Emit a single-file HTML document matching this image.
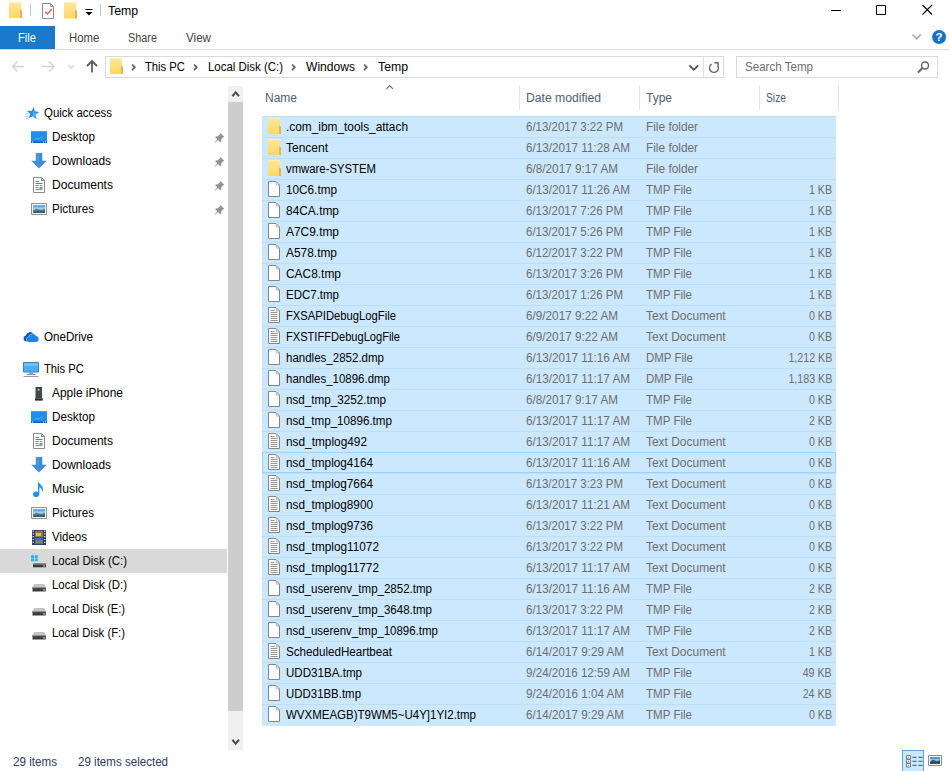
<!DOCTYPE html>
<html><head><meta charset="utf-8"><title>Temp</title>
<style>
*{box-sizing:border-box;margin:0;padding:0}
html,body{width:949px;height:771px;overflow:hidden;background:#fff}
body{position:relative;font-family:"Liberation Sans",sans-serif;font-size:12px;color:#000;line-height:16px}
.a{position:absolute;white-space:nowrap}
.t{position:absolute;white-space:nowrap;height:16px;line-height:16px}
.g{color:#6d6d6d}
.row{position:absolute;left:262px;width:574px;height:21px;background:#cce8ff;border-top:1px solid #bcdef9}
.row .ic{position:absolute;left:5px;top:1px}
.row span{position:absolute;top:2px;white-space:nowrap;line-height:16px;transform-origin:0 0}
.x{display:inline-block;transform-origin:0 0}
.row .n{left:24px}
.row .d{left:264px;color:#6d6d6d}
.row .ty{left:384px;color:#6d6d6d}
.row .s{right:4px;color:#6d6d6d;transform-origin:100% 0}
.nav{position:absolute;left:0;width:227px;height:24px}
</style></head><body>

<svg width="0" height="0" style="position:absolute"><defs><linearGradient id="fg" x1="0" y1="0" x2="0" y2="1"><stop offset="0" stop-color="#ffe89a"/><stop offset="1" stop-color="#ffd765"/></linearGradient></defs></svg>
<div class="a" style="left:108px;top:3px;font-size:12px;line-height:16px"><span class="x" style="transform:scaleX(1.0224)">Temp</span></div>
<div class="a" style="left:30px;top:4px;width:1px;height:12px;background:#c4c4c4"></div>
<div class="a" style="left:100px;top:4px;width:1px;height:12px;background:#c4c4c4"></div>
<svg class="a" style="left:9px;top:2px" width="14" height="16" viewBox="0 0 14 16"><path d="M0 0h12v16H0z" fill="url(#fg)"/><path d="M11 7.2l2 1.500V16h-2z" fill="#e2b64c"/><path d="M0 0h12v1H0z" fill="#ffefb5"/></svg>
<svg class="a" style="left:42px;top:3px" width="13" height="16" viewBox="0 0 13 16"><path d="M0.500 0.500h8l3 3v12h-11z" fill="#fff" stroke="#8a8a8a"/><path d="M8.500 0.500v3h3" fill="none" stroke="#a0a0a0"/><path d="M3 8.500l2.500 2.500 4.500-5" fill="none" stroke="#dc6a55" stroke-width="1.500"/></svg>
<svg class="a" style="left:64px;top:2px" width="14" height="17" viewBox="0 0 14 17"><path d="M0 0h12v16.5H0z" fill="url(#fg)"/><path d="M11 7.425l2 1.500V16.5h-2z" fill="#e2b64c"/><path d="M0 0h12v1H0z" fill="#ffefb5"/></svg>
<svg class="a" style="left:85px;top:9px" width="8" height="7" viewBox="0 0 8 7"><path d="M0.500 0.500h7" stroke="#000"/><path d="M0.500 3h7L4 6.500z" fill="#000"/></svg>
<svg class="a" style="left:829px;top:0" width="120" height="24" viewBox="0 0 120 24"><path d="M2 10.500h10" stroke="#000"/><path d="M47.500 5.500h9v9h-9z" fill="none" stroke="#000"/><path d="M93.500 5l9.500 9.500M103 5l-9.500 9.500" stroke="#000" stroke-width="1.1"/></svg>
<div class="a" style="left:0;top:26px;width:55px;height:23px;background:#1979ca"></div>
<div class="a" style="left:0;top:49px;width:949px;height:1px;background:#dadbdc"></div>
<div class="t" style="left:18px;top:30px;color:#fff"><span class="x" style="transform:scaleX(0.9305)">File</span></div>
<div class="t" style="left:69px;top:30px;color:#444"><span class="x" style="transform:scaleX(0.9464)">Home</span></div>
<div class="t" style="left:128px;top:30px;color:#444"><span class="x" style="transform:scaleX(0.9054)">Share</span></div>
<div class="t" style="left:186px;top:30px;color:#444"><span class="x" style="transform:scaleX(0.9691)">View</span></div>
<svg class="a" style="left:911px;top:33px" width="12" height="8" viewBox="0 0 12 8"><path d="M1.500 1.500l4.200 4.200 4.200-4.200" fill="none" stroke="#adadad" stroke-width="1.700"/></svg>
<svg class="a" style="left:931px;top:29px" width="16" height="16" viewBox="0 0 16 16"><circle cx="8.100" cy="8" r="7" fill="#1570c6"/><text x="8.100" y="12.200" text-anchor="middle" font-family="Liberation Sans, sans-serif" font-weight="bold" font-size="11.500" fill="#fff">?</text></svg>
<svg class="a" style="left:10px;top:58px" width="90" height="18" viewBox="0 0 90 18"><path d="M2.500 8.500h11.500M7.500 3.500l-5 5 5 5" fill="none" stroke="#d4d4d4" stroke-width="1.500"/><path d="M31.500 8.500h12.500M39 3.500l5 5-5 5" fill="none" stroke="#d4d4d4" stroke-width="1.500"/><path d="M58 7l3.200 3 3.200-3" fill="none" stroke="#d4d4d4" stroke-width="1.300"/><path d="M82 14.500v-11M77 8l5-5 5 5" fill="none" stroke="#5e5e5e" stroke-width="1.800"/></svg>
<div class="a" style="left:105px;top:56px;width:619px;height:22px;border:1px solid #d9d9d9;background:#fff"></div>
<div class="a" style="left:703px;top:57px;width:1px;height:20px;background:#e0e0e0"></div>
<svg class="a" style="left:110px;top:58px" width="14" height="16" viewBox="0 0 14 16"><path d="M0 0h12v16H0z" fill="url(#fg)"/><path d="M11 7.2l2 1.500V16h-2z" fill="#e2b64c"/><path d="M0 0h12v1H0z" fill="#ffefb5"/></svg>
<svg class="a" style="left:131px;top:63px" width="6" height="9" viewBox="0 0 6 9"><path d="M1 1.500l2.800 2.800-2.800 2.800" fill="none" stroke="#5e5e5e" stroke-width="1.700"/></svg>
<svg class="a" style="left:193px;top:63px" width="6" height="9" viewBox="0 0 6 9"><path d="M1 1.500l2.800 2.800-2.800 2.800" fill="none" stroke="#5e5e5e" stroke-width="1.700"/></svg>
<svg class="a" style="left:291px;top:63px" width="6" height="9" viewBox="0 0 6 9"><path d="M1 1.500l2.800 2.800-2.800 2.800" fill="none" stroke="#5e5e5e" stroke-width="1.700"/></svg>
<svg class="a" style="left:363px;top:63px" width="6" height="9" viewBox="0 0 6 9"><path d="M1 1.500l2.800 2.800-2.800 2.800" fill="none" stroke="#5e5e5e" stroke-width="1.700"/></svg>
<div class="t" style="left:145px;top:59px"><span class="x" style="transform:scaleX(0.937)">This PC</span></div>
<div class="t" style="left:208px;top:59px"><span class="x" style="transform:scaleX(0.9531)">Local Disk (C:)</span></div>
<div class="t" style="left:306px;top:59px"><span class="x" style="transform:scaleX(1.0064)">Windows</span></div>
<div class="t" style="left:378px;top:59px"><span class="x" style="transform:scaleX(1.0224)">Temp</span></div>
<svg class="a" style="left:688px;top:64px" width="12" height="8" viewBox="0 0 12 8"><path d="M1.500 1.500l4.300 4.300 4.300-4.300" fill="none" stroke="#505050" stroke-width="1.800"/></svg>
<svg class="a" style="left:707px;top:60px" width="14" height="15" viewBox="0 0 14 15"><path d="M4.600 4.200A4.400 4.400 0 1 0 11 6.200" fill="none" stroke="#666" stroke-width="1.500"/><path d="M7.300 2.700h3.700v3.700" fill="none" stroke="#666" stroke-width="1.500"/></svg>
<div class="a" style="left:736px;top:56px;width:202px;height:22px;border:1px solid #d9d9d9;background:#fff"></div>
<div class="t" style="left:745px;top:59px;color:#6d6d6d"><span class="x" style="transform:scaleX(0.9648)">Search Temp</span></div>
<svg class="a" style="left:916px;top:60px" width="14" height="14" viewBox="0 0 14 14"><circle cx="9" cy="5.500" r="3.500" fill="none" stroke="#666" stroke-width="1.500"/><path d="M6.500 8l-4.500 4.500" stroke="#666" stroke-width="2"/></svg>
<div class="nav" style="top:101px"><svg class="a" style="left:23px;top:4px" width="16" height="16" viewBox="0 0 16 16"><path d="M10.69 1.84 L11.84 6.36 L16.46 7.03 L12.51 9.52 L13.30 14.12 L9.71 11.13 L5.58 13.30 L7.31 8.97 L3.97 5.72 L8.62 6.02z" fill="#2a8fe8"/><path d="M10 5.500l1 2.300 2.300 0.300-1.700 1.600 0.400 2.300-2-1.100z" fill="#4fb6f7"/><path d="M4.300 8.500l-2.300 0.900M5 10.500l-3.300 1.600M5.500 12.700l-2.500 1.300" stroke="#7cc0f5" stroke-width="0.900"/></svg><div class="t" style="left:44px;top:4px"><span class="x" style="transform:scaleX(0.9529)">Quick access</span></div></div>
<div class="nav" style="top:125px"><svg class="a" style="left:31px;top:4px" width="16" height="16" viewBox="0 0 16 16"><path d="M0 2h16v12H0z" fill="#1f8fef"/><path d="M0 2h16v1H0z" fill="#3ba3f7"/><path d="M0 12.500h16v1.500H0z" fill="#0d62b8"/><path d="M1 13h1.200M12 13h1M14 13h1" stroke="#d8ecff" stroke-width="1"/><path d="M4 9.500q3 1.500 7-1.500" fill="none" stroke="#55b4fa" stroke-width="1"/></svg><div class="t" style="left:52px;top:4px"><span class="x" style="transform:scaleX(0.9766)">Desktop</span></div><svg class="a" style="left:213.500px;top:6.500px" width="11" height="11" viewBox="0 0 13 13"><path d="M7.2 0.800l5 5-1.300 0.500-2.600 2.600 0.300 2.200-1.300 1-2.500-2.500-3.600 3.200-0.500-0.500 3.200-3.600-2.500-2.500 1-1.300 2.200 0.300 2.600-2.600z" fill="#929292"/></svg></div>
<div class="nav" style="top:149px"><svg class="a" style="left:31px;top:4px" width="16" height="16" viewBox="0 0 16 16"><path d="M4.800 0h6.500v7.800h4.300l-7.600 7.700-7.600-7.700h4.400z" fill="#3c8ddb"/><path d="M5.800 0h2v8H5.800z" fill="#5aa5e8" opacity=".6"/></svg><div class="t" style="left:52px;top:4px"><span class="x" style="transform:scaleX(0.9937)">Downloads</span></div><svg class="a" style="left:213.500px;top:6.500px" width="11" height="11" viewBox="0 0 13 13"><path d="M7.2 0.800l5 5-1.300 0.500-2.600 2.600 0.300 2.200-1.300 1-2.500-2.500-3.600 3.200-0.500-0.500 3.200-3.600-2.500-2.500 1-1.300 2.200 0.300 2.600-2.600z" fill="#929292"/></svg></div>
<div class="nav" style="top:173px"><svg class="a" style="left:31px;top:4px" width="16" height="16" viewBox="0 0 16 16"><path d="M2.500 0.500h8l3 3v12h-11z" fill="#fff" stroke="#8a8a8a"/><path d="M10.500 0.500v3h3" fill="none" stroke="#8a8a8a"/><path d="M4.500 4.500h3.500M4.500 6.500h7" stroke="#3f85d0"/><path d="M4.500 8.500h3M8.500 8.500h3M4.500 10.500h3M4.500 12.500h7" stroke="#7d8a99"/><path d="M8.500 10h3v1.500h-3z" fill="#5b6f88"/></svg><div class="t" style="left:52px;top:4px"><span class="x" style="transform:scaleX(1.0049)">Documents</span></div><svg class="a" style="left:213.500px;top:6.500px" width="11" height="11" viewBox="0 0 13 13"><path d="M7.2 0.800l5 5-1.300 0.500-2.600 2.600 0.300 2.200-1.300 1-2.500-2.500-3.600 3.200-0.500-0.500 3.200-3.600-2.500-2.500 1-1.300 2.200 0.300 2.600-2.600z" fill="#929292"/></svg></div>
<div class="nav" style="top:197px"><svg class="a" style="left:31px;top:4px" width="16" height="16" viewBox="0 0 16 16"><path d="M0.500 2.500h15v11h-15z" fill="#fff" stroke="#8e8e8e"/><path d="M2 4h12v8H2z" fill="#9ccdf4"/><path d="M2 4h12v2.500H2z" fill="#6fa9e4"/><path d="M2 9.500q3-2.500 6-1 3 1 6-1V12H2z" fill="#4f7c80"/><path d="M2 11q4-1 12-0.500V12H2z" fill="#35585a"/></svg><div class="t" style="left:52px;top:4px"><span class="x" style="transform:scaleX(0.9686)">Pictures</span></div><svg class="a" style="left:213.500px;top:6.500px" width="11" height="11" viewBox="0 0 13 13"><path d="M7.2 0.800l5 5-1.300 0.500-2.600 2.600 0.300 2.200-1.300 1-2.500-2.500-3.600 3.200-0.500-0.500 3.200-3.600-2.500-2.500 1-1.300 2.200 0.300 2.600-2.600z" fill="#929292"/></svg></div>
<div class="nav" style="top:325px"><svg class="a" style="left:23px;top:4px" width="16" height="16" viewBox="0 0 16 16"><path d="M3.200 12.500a3 3 0 0 1-0.400-5.900 4.200 4.200 0 0 1 7.800-1.400 3.300 3.300 0 0 1 1.900 0.900l-4 6.400z" fill="#0f5eb8"/><path d="M6.500 13a2.600 2.600 0 0 1-0.300-5.200 3.600 3.600 0 0 1 6.700-0.700 3 3 0 0 1 0.600 5.900z" fill="#1c84e8" stroke="#fff" stroke-width="0.800" paint-order="stroke"/></svg><div class="t" style="left:44px;top:4px"><span class="x" style="transform:scaleX(0.9667)">OneDrive</span></div></div>
<div class="nav" style="top:357px"><svg class="a" style="left:23px;top:4px" width="16" height="16" viewBox="0 0 16 16"><path d="M0.500 1.500h15v9.500h-15z" fill="#4aaef8" stroke="#3f7fb8"/><path d="M1 2h14v3H1z" fill="#7cc6fb" opacity=".7"/><path d="M6 11.500h4v1.500H6z" fill="#8aa0b4"/><path d="M3.500 13h9v1h-9z" fill="#5aa0dc"/><path d="M0.500 15h15v1h-15z" fill="#9a9a9a"/></svg><div class="t" style="left:44px;top:4px"><span class="x" style="transform:scaleX(0.937)">This PC</span></div></div>
<div class="nav" style="top:381px"><svg class="a" style="left:31px;top:4px" width="16" height="16" viewBox="0 0 16 16"><path d="M4.500 2h6.500v11H4.500z" fill="#3f4a46"/><path d="M6.700 4h1.800v1.500H6.700z" fill="#c9d2cf"/><path d="M4 13.200h7.800v2.400H4z" fill="#2a2f2d"/></svg><div class="t" style="left:52px;top:4px"><span class="x" style="transform:scaleX(0.9945)">Apple iPhone</span></div></div>
<div class="nav" style="top:405px"><svg class="a" style="left:31px;top:4px" width="16" height="16" viewBox="0 0 16 16"><path d="M0 2h16v12H0z" fill="#1f8fef"/><path d="M0 2h16v1H0z" fill="#3ba3f7"/><path d="M0 12.500h16v1.500H0z" fill="#0d62b8"/><path d="M1 13h1.200M12 13h1M14 13h1" stroke="#d8ecff" stroke-width="1"/><path d="M4 9.500q3 1.500 7-1.500" fill="none" stroke="#55b4fa" stroke-width="1"/></svg><div class="t" style="left:52px;top:4px"><span class="x" style="transform:scaleX(0.9766)">Desktop</span></div></div>
<div class="nav" style="top:429px"><svg class="a" style="left:31px;top:4px" width="16" height="16" viewBox="0 0 16 16"><path d="M2.500 0.500h8l3 3v12h-11z" fill="#fff" stroke="#8a8a8a"/><path d="M10.500 0.500v3h3" fill="none" stroke="#8a8a8a"/><path d="M4.500 4.500h3.500M4.500 6.500h7" stroke="#3f85d0"/><path d="M4.500 8.500h3M8.500 8.500h3M4.500 10.500h3M4.500 12.500h7" stroke="#7d8a99"/><path d="M8.500 10h3v1.500h-3z" fill="#5b6f88"/></svg><div class="t" style="left:52px;top:4px"><span class="x" style="transform:scaleX(1.0049)">Documents</span></div></div>
<div class="nav" style="top:453px"><svg class="a" style="left:31px;top:4px" width="16" height="16" viewBox="0 0 16 16"><path d="M4.800 0h6.500v7.800h4.300l-7.600 7.700-7.600-7.700h4.400z" fill="#3c8ddb"/><path d="M5.800 0h2v8H5.800z" fill="#5aa5e8" opacity=".6"/></svg><div class="t" style="left:52px;top:4px"><span class="x" style="transform:scaleX(0.9937)">Downloads</span></div></div>
<div class="nav" style="top:477px"><svg class="a" style="left:31px;top:4px" width="16" height="16" viewBox="0 0 16 16"><path d="M7 0c0.500 3.200 5 3.800 5 8.300 0 1.200-0.500 2-1 2.500 0.400-2.300-1.200-4-2.700-4.500v7a3.200 2.700 0 1 1-1.300-2.200z" fill="#1e92f4"/></svg><div class="t" style="left:52px;top:4px"><span class="x" style="transform:scaleX(1.0209)">Music</span></div></div>
<div class="nav" style="top:501px"><svg class="a" style="left:31px;top:4px" width="16" height="16" viewBox="0 0 16 16"><path d="M0.500 2.500h15v11h-15z" fill="#fff" stroke="#8e8e8e"/><path d="M2 4h12v8H2z" fill="#9ccdf4"/><path d="M2 4h12v2.500H2z" fill="#6fa9e4"/><path d="M2 9.500q3-2.500 6-1 3 1 6-1V12H2z" fill="#4f7c80"/><path d="M2 11q4-1 12-0.500V12H2z" fill="#35585a"/></svg><div class="t" style="left:52px;top:4px"><span class="x" style="transform:scaleX(0.9686)">Pictures</span></div></div>
<div class="nav" style="top:525px"><svg class="a" style="left:31px;top:4px" width="16" height="16" viewBox="0 0 16 16"><path d="M1 1h14v15H1z" fill="#2b3766"/><path d="M3.800 1.800h8.400v6.400H3.800z" fill="#8f7b3a"/><path d="M3.800 8.800h8.400v6.400H3.800z" fill="#3f6fc0"/><path d="M5 4h5v3H5z" fill="#d8c24a"/><path d="M5 11.500h6v2.500H5z" fill="#8a8a3a"/><path d="M2.200 1.500v14M13.800 1.500v14" stroke="#f4f4ff" stroke-width="1.200" stroke-dasharray="1.200 1.600"/></svg><div class="t" style="left:52px;top:4px"><span class="x" style="transform:scaleX(0.9593)">Videos</span></div></div>
<div class="nav" style="top:549px;background:#d9d9d9"><svg class="a" style="left:31px;top:4px" width="16" height="16" viewBox="0 0 16 16"><path d="M0 2.300h3v2.600H0zM3.800 2.300h3v2.600h-3zM0 5.600h3v2.600H0zM3.800 5.600h3v2.600h-3z" fill="#1fb4f2"/><path d="M2 10.500h13v3.800H2z" fill="#3a3a3a"/><path d="M2 10.500h13v1.200H2z" fill="#8a8a8a"/><path d="M12 12.500h2v1h-2z" fill="#d0d0d0"/></svg><div class="t" style="left:52px;top:4px"><span class="x" style="transform:scaleX(0.9531)">Local Disk (C:)</span></div></div>
<div class="nav" style="top:573px"><svg class="a" style="left:31px;top:4px" width="16" height="16" viewBox="0 0 16 16"><path d="M3 7l-1.300 3h13l-1.300-3z" fill="#c4c4c4"/><path d="M1.500 10h13.300v4.500H1.500z" fill="#3e3e3e"/><path d="M1.500 10h13.300v1.200H1.500z" fill="#8e8e8e"/><path d="M12 12.500h2v1h-2z" fill="#cfcfcf"/></svg><div class="t" style="left:52px;top:4px"><span class="x" style="transform:scaleX(0.9531)">Local Disk (D:)</span></div></div>
<div class="nav" style="top:597px"><svg class="a" style="left:31px;top:4px" width="16" height="16" viewBox="0 0 16 16"><path d="M3 7l-1.300 3h13l-1.300-3z" fill="#c4c4c4"/><path d="M1.500 10h13.300v4.500H1.500z" fill="#3e3e3e"/><path d="M1.500 10h13.300v1.200H1.500z" fill="#8e8e8e"/><path d="M12 12.500h2v1h-2z" fill="#cfcfcf"/></svg><div class="t" style="left:52px;top:4px"><span class="x" style="transform:scaleX(0.9355)">Local Disk (E:)</span></div></div>
<div class="nav" style="top:621px"><svg class="a" style="left:31px;top:4px" width="16" height="16" viewBox="0 0 16 16"><path d="M3 7l-1.300 3h13l-1.300-3z" fill="#c4c4c4"/><path d="M1.500 10h13.300v4.500H1.500z" fill="#3e3e3e"/><path d="M1.500 10h13.300v1.200H1.500z" fill="#8e8e8e"/><path d="M12 12.500h2v1h-2z" fill="#cfcfcf"/></svg><div class="t" style="left:52px;top:4px"><span class="x" style="transform:scaleX(0.9438)">Local Disk (F:)</span></div></div>
<div class="a" style="left:228px;top:86px;width:15px;height:664px;background:#f0f0f0"></div>
<div class="a" style="left:228px;top:102px;width:15px;height:609px;background:#cdcdcd"></div>
<svg class="a" style="left:230.800px;top:90px" width="10" height="8" viewBox="0 0 10 8"><path d="M1.400 6.200l3.300-3.800 3.300 3.800" fill="none" stroke="#505050" stroke-width="2.100"/></svg>
<svg class="a" style="left:230.800px;top:738px" width="10" height="8" viewBox="0 0 10 8"><path d="M1.400 1.800l3.300 3.800 3.300-3.800" fill="none" stroke="#505050" stroke-width="2.100"/></svg>
<svg class="a" style="left:385px;top:84px" width="10" height="6" viewBox="0 0 10 6"><path d="M1.500 4.800l3.200-3.200 3.200 3.200" fill="none" stroke="#666" stroke-width="1.1"/></svg>
<div class="a" style="left:519px;top:85px;width:1px;height:25px;background:#e5e5e5"></div>
<div class="a" style="left:639px;top:85px;width:1px;height:25px;background:#e5e5e5"></div>
<div class="a" style="left:759px;top:85px;width:1px;height:25px;background:#e5e5e5"></div>
<div class="a" style="left:838px;top:85px;width:1px;height:25px;background:#e5e5e5"></div>
<div class="t" style="left:265px;top:90px;color:#4c607a"><span class="x">Name</span></div>
<div class="t" style="left:526px;top:90px;color:#4c607a"><span class="x" style="transform:scaleX(1.0129)">Date modified</span></div>
<div class="t" style="left:646px;top:90px;color:#4c607a"><span class="x">Type</span></div>
<div class="t" style="left:766px;top:90px;color:#4c607a"><span class="x" style="transform:scaleX(0.8568)">Size</span></div>
<div class="row" style="top:116px"><svg class="ic" width="16" height="16" viewBox="0 0 16 16"><g transform="translate(1 0)"><path d="M0 0h12v16H0z" fill="url(#fg)"/><path d="M11 7.2l2 1.500V16h-2z" fill="#e2b64c"/><path d="M0 0h12v1H0z" fill="#ffefb5"/></g></svg><span class="n" style="transform:scaleX(0.9886)">.com_ibm_tools_attach</span><span class="d" style="transform:scaleX(0.9564)">6/13/2017 3:22 PM</span><span class="ty" style="transform:scaleX(0.987)">File folder</span></div>
<div class="row" style="top:137px"><svg class="ic" width="16" height="16" viewBox="0 0 16 16"><g transform="translate(1 0)"><path d="M0 0h12v16H0z" fill="url(#fg)"/><path d="M11 7.2l2 1.500V16h-2z" fill="#e2b64c"/><path d="M0 0h12v1H0z" fill="#ffefb5"/></g></svg><span class="n">Tencent</span><span class="d" style="transform:scaleX(0.9762)">6/13/2017 11:28 AM</span><span class="ty" style="transform:scaleX(0.987)">File folder</span></div>
<div class="row" style="top:158px"><svg class="ic" width="16" height="16" viewBox="0 0 16 16"><g transform="translate(1 0)"><path d="M0 0h12v16H0z" fill="url(#fg)"/><path d="M11 7.2l2 1.500V16h-2z" fill="#e2b64c"/><path d="M0 0h12v1H0z" fill="#ffefb5"/></g></svg><span class="n" style="transform:scaleX(0.944)">vmware-SYSTEM</span><span class="d" style="transform:scaleX(0.9779)">6/8/2017 9:17 AM</span><span class="ty" style="transform:scaleX(0.987)">File folder</span></div>
<div class="row" style="top:179px"><svg class="ic" width="16" height="16" viewBox="0 0 16 16"><path d="M1.5 0.5h7.500l3.500 3.500v11.500h-11z" fill="#fff" stroke="#858585"/><path d="M9.300 1v3h3" fill="none" stroke="#a8a8a8" stroke-width="0.900"/></svg><span class="n" style="transform:scaleX(0.9802)">10C6.tmp</span><span class="d" style="transform:scaleX(0.9762)">6/13/2017 11:26 AM</span><span class="ty" style="transform:scaleX(0.9624)">TMP File</span><span class="s" style="transform:scaleX(0.8841)">1 KB</span></div>
<div class="row" style="top:200px"><svg class="ic" width="16" height="16" viewBox="0 0 16 16"><path d="M1.5 0.5h7.500l3.500 3.500v11.500h-11z" fill="#fff" stroke="#858585"/><path d="M9.300 1v3h3" fill="none" stroke="#a8a8a8" stroke-width="0.900"/></svg><span class="n" style="transform:scaleX(0.9933)">84CA.tmp</span><span class="d" style="transform:scaleX(0.9564)">6/13/2017 7:26 PM</span><span class="ty" style="transform:scaleX(0.9624)">TMP File</span><span class="s" style="transform:scaleX(0.8841)">1 KB</span></div>
<div class="row" style="top:221px"><svg class="ic" width="16" height="16" viewBox="0 0 16 16"><path d="M1.5 0.5h7.500l3.500 3.500v11.500h-11z" fill="#fff" stroke="#858585"/><path d="M9.300 1v3h3" fill="none" stroke="#a8a8a8" stroke-width="0.900"/></svg><span class="n" style="transform:scaleX(0.9933)">A7C9.tmp</span><span class="d" style="transform:scaleX(0.9564)">6/13/2017 5:26 PM</span><span class="ty" style="transform:scaleX(0.9624)">TMP File</span><span class="s" style="transform:scaleX(0.8841)">1 KB</span></div>
<div class="row" style="top:242px"><svg class="ic" width="16" height="16" viewBox="0 0 16 16"><path d="M1.5 0.5h7.500l3.500 3.500v11.500h-11z" fill="#fff" stroke="#858585"/><path d="M9.300 1v3h3" fill="none" stroke="#a8a8a8" stroke-width="0.900"/></svg><span class="n" style="transform:scaleX(0.9927)">A578.tmp</span><span class="d" style="transform:scaleX(0.9564)">6/12/2017 3:22 PM</span><span class="ty" style="transform:scaleX(0.9624)">TMP File</span><span class="s" style="transform:scaleX(0.8841)">1 KB</span></div>
<div class="row" style="top:263px"><svg class="ic" width="16" height="16" viewBox="0 0 16 16"><path d="M1.5 0.5h7.500l3.500 3.500v11.500h-11z" fill="#fff" stroke="#858585"/><path d="M9.300 1v3h3" fill="none" stroke="#a8a8a8" stroke-width="0.900"/></svg><span class="n" style="transform:scaleX(0.9935)">CAC8.tmp</span><span class="d" style="transform:scaleX(0.9564)">6/13/2017 3:26 PM</span><span class="ty" style="transform:scaleX(0.9624)">TMP File</span><span class="s" style="transform:scaleX(0.8841)">1 KB</span></div>
<div class="row" style="top:284px"><svg class="ic" width="16" height="16" viewBox="0 0 16 16"><path d="M1.5 0.5h7.500l3.500 3.500v11.500h-11z" fill="#fff" stroke="#858585"/><path d="M9.300 1v3h3" fill="none" stroke="#a8a8a8" stroke-width="0.900"/></svg><span class="n" style="transform:scaleX(0.9574)">EDC7.tmp</span><span class="d" style="transform:scaleX(0.9564)">6/13/2017 1:26 PM</span><span class="ty" style="transform:scaleX(0.9624)">TMP File</span><span class="s" style="transform:scaleX(0.8841)">1 KB</span></div>
<div class="row" style="top:305px"><svg class="ic" width="16" height="16" viewBox="0 0 16 16"><path d="M1.5 0.5h7.500l3.500 3.500v11.500h-11z" fill="#fff" stroke="#858585"/><path d="M9.300 1v3h3" fill="none" stroke="#a8a8a8" stroke-width="0.900"/><path d="M3.500 3.500h4M3.500 5.500h7M3.500 7.500h7M3.500 9.500h7M3.500 11.500h7M3.500 13.500h7" stroke="#9c948c"/></svg><span class="n" style="transform:scaleX(0.9369)">FXSAPIDebugLogFile</span><span class="d" style="transform:scaleX(0.9779)">6/9/2017 9:22 AM</span><span class="ty" style="transform:scaleX(0.9957)">Text Document</span><span class="s" style="transform:scaleX(0.8841)">0 KB</span></div>
<div class="row" style="top:326px"><svg class="ic" width="16" height="16" viewBox="0 0 16 16"><path d="M1.5 0.5h7.500l3.500 3.500v11.500h-11z" fill="#fff" stroke="#858585"/><path d="M9.300 1v3h3" fill="none" stroke="#a8a8a8" stroke-width="0.900"/><path d="M3.500 3.500h4M3.500 5.500h7M3.500 7.500h7M3.500 9.500h7M3.500 11.500h7M3.500 13.500h7" stroke="#9c948c"/></svg><span class="n" style="transform:scaleX(0.9239)">FXSTIFFDebugLogFile</span><span class="d" style="transform:scaleX(0.9779)">6/9/2017 9:22 AM</span><span class="ty" style="transform:scaleX(0.9957)">Text Document</span><span class="s" style="transform:scaleX(0.8841)">0 KB</span></div>
<div class="row" style="top:347px"><svg class="ic" width="16" height="16" viewBox="0 0 16 16"><path d="M1.5 0.5h7.500l3.500 3.500v11.500h-11z" fill="#fff" stroke="#858585"/><path d="M9.300 1v3h3" fill="none" stroke="#a8a8a8" stroke-width="0.900"/></svg><span class="n" style="transform:scaleX(0.9599)">handles_2852.dmp</span><span class="d" style="transform:scaleX(0.9762)">6/13/2017 11:16 AM</span><span class="ty" style="transform:scaleX(0.9567)">DMP File</span><span class="s" style="transform:scaleX(0.8911)">1,212 KB</span></div>
<div class="row" style="top:368px"><svg class="ic" width="16" height="16" viewBox="0 0 16 16"><path d="M1.5 0.5h7.500l3.500 3.500v11.500h-11z" fill="#fff" stroke="#858585"/><path d="M9.300 1v3h3" fill="none" stroke="#a8a8a8" stroke-width="0.900"/></svg><span class="n" style="transform:scaleX(0.9562)">handles_10896.dmp</span><span class="d" style="transform:scaleX(0.9762)">6/13/2017 11:17 AM</span><span class="ty" style="transform:scaleX(0.9567)">DMP File</span><span class="s" style="transform:scaleX(0.8911)">1,183 KB</span></div>
<div class="row" style="top:389px"><svg class="ic" width="16" height="16" viewBox="0 0 16 16"><path d="M1.5 0.5h7.500l3.500 3.500v11.500h-11z" fill="#fff" stroke="#858585"/><path d="M9.300 1v3h3" fill="none" stroke="#a8a8a8" stroke-width="0.900"/></svg><span class="n" style="transform:scaleX(0.9734)">nsd_tmp_3252.tmp</span><span class="d" style="transform:scaleX(0.9779)">6/8/2017 9:17 AM</span><span class="ty" style="transform:scaleX(0.9624)">TMP File</span><span class="s" style="transform:scaleX(0.8841)">0 KB</span></div>
<div class="row" style="top:410px"><svg class="ic" width="16" height="16" viewBox="0 0 16 16"><path d="M1.5 0.5h7.500l3.500 3.500v11.500h-11z" fill="#fff" stroke="#858585"/><path d="M9.300 1v3h3" fill="none" stroke="#a8a8a8" stroke-width="0.900"/></svg><span class="n" style="transform:scaleX(0.9689)">nsd_tmp_10896.tmp</span><span class="d" style="transform:scaleX(0.9762)">6/13/2017 11:17 AM</span><span class="ty" style="transform:scaleX(0.9624)">TMP File</span><span class="s" style="transform:scaleX(0.8841)">2 KB</span></div>
<div class="row" style="top:431px"><svg class="ic" width="16" height="16" viewBox="0 0 16 16"><path d="M1.5 0.5h7.500l3.500 3.500v11.500h-11z" fill="#fff" stroke="#858585"/><path d="M9.300 1v3h3" fill="none" stroke="#a8a8a8" stroke-width="0.900"/><path d="M3.500 3.500h4M3.500 5.500h7M3.500 7.500h7M3.500 9.500h7M3.500 11.500h7M3.500 13.500h7" stroke="#9c948c"/></svg><span class="n" style="transform:scaleX(0.9871)">nsd_tmplog492</span><span class="d" style="transform:scaleX(0.9762)">6/13/2017 11:17 AM</span><span class="ty" style="transform:scaleX(0.9957)">Text Document</span><span class="s" style="transform:scaleX(0.8841)">0 KB</span></div>
<div class="row" style="top:452px;outline:1px solid #99d1ff;outline-offset:-1px"><svg class="ic" width="16" height="16" viewBox="0 0 16 16"><path d="M1.5 0.5h7.500l3.500 3.500v11.500h-11z" fill="#fff" stroke="#858585"/><path d="M9.300 1v3h3" fill="none" stroke="#a8a8a8" stroke-width="0.900"/><path d="M3.500 3.500h4M3.500 5.500h7M3.500 7.500h7M3.500 9.500h7M3.500 11.500h7M3.500 13.500h7" stroke="#9c948c"/></svg><span class="n" style="transform:scaleX(0.9805)">nsd_tmplog4164</span><span class="d" style="transform:scaleX(0.9762)">6/13/2017 11:16 AM</span><span class="ty" style="transform:scaleX(0.9957)">Text Document</span><span class="s" style="transform:scaleX(0.8841)">0 KB</span></div>
<div class="row" style="top:473px"><svg class="ic" width="16" height="16" viewBox="0 0 16 16"><path d="M1.5 0.5h7.500l3.500 3.500v11.500h-11z" fill="#fff" stroke="#858585"/><path d="M9.300 1v3h3" fill="none" stroke="#a8a8a8" stroke-width="0.900"/><path d="M3.500 3.500h4M3.500 5.500h7M3.500 7.500h7M3.500 9.500h7M3.500 11.500h7M3.500 13.500h7" stroke="#9c948c"/></svg><span class="n" style="transform:scaleX(0.9805)">nsd_tmplog7664</span><span class="d" style="transform:scaleX(0.9564)">6/13/2017 3:23 PM</span><span class="ty" style="transform:scaleX(0.9957)">Text Document</span><span class="s" style="transform:scaleX(0.8841)">0 KB</span></div>
<div class="row" style="top:494px"><svg class="ic" width="16" height="16" viewBox="0 0 16 16"><path d="M1.5 0.5h7.500l3.500 3.500v11.500h-11z" fill="#fff" stroke="#858585"/><path d="M9.300 1v3h3" fill="none" stroke="#a8a8a8" stroke-width="0.900"/><path d="M3.500 3.500h4M3.500 5.500h7M3.500 7.500h7M3.500 9.500h7M3.500 11.500h7M3.500 13.500h7" stroke="#9c948c"/></svg><span class="n" style="transform:scaleX(0.9805)">nsd_tmplog8900</span><span class="d" style="transform:scaleX(0.9762)">6/13/2017 11:21 AM</span><span class="ty" style="transform:scaleX(0.9957)">Text Document</span><span class="s" style="transform:scaleX(0.8841)">0 KB</span></div>
<div class="row" style="top:515px"><svg class="ic" width="16" height="16" viewBox="0 0 16 16"><path d="M1.5 0.5h7.500l3.500 3.500v11.500h-11z" fill="#fff" stroke="#858585"/><path d="M9.300 1v3h3" fill="none" stroke="#a8a8a8" stroke-width="0.900"/><path d="M3.500 3.500h4M3.500 5.500h7M3.500 7.500h7M3.500 9.500h7M3.500 11.500h7M3.500 13.500h7" stroke="#9c948c"/></svg><span class="n" style="transform:scaleX(0.9805)">nsd_tmplog9736</span><span class="d" style="transform:scaleX(0.9564)">6/13/2017 3:22 PM</span><span class="ty" style="transform:scaleX(0.9957)">Text Document</span><span class="s" style="transform:scaleX(0.8841)">0 KB</span></div>
<div class="row" style="top:536px"><svg class="ic" width="16" height="16" viewBox="0 0 16 16"><path d="M1.5 0.5h7.500l3.500 3.500v11.500h-11z" fill="#fff" stroke="#858585"/><path d="M9.300 1v3h3" fill="none" stroke="#a8a8a8" stroke-width="0.900"/><path d="M3.500 3.500h4M3.500 5.500h7M3.500 7.500h7M3.500 9.500h7M3.500 11.500h7M3.500 13.500h7" stroke="#9c948c"/></svg><span class="n" style="transform:scaleX(0.9838)">nsd_tmplog11072</span><span class="d" style="transform:scaleX(0.9564)">6/13/2017 3:22 PM</span><span class="ty" style="transform:scaleX(0.9957)">Text Document</span><span class="s" style="transform:scaleX(0.8841)">0 KB</span></div>
<div class="row" style="top:557px"><svg class="ic" width="16" height="16" viewBox="0 0 16 16"><path d="M1.5 0.5h7.500l3.500 3.500v11.500h-11z" fill="#fff" stroke="#858585"/><path d="M9.300 1v3h3" fill="none" stroke="#a8a8a8" stroke-width="0.900"/><path d="M3.500 3.500h4M3.500 5.500h7M3.500 7.500h7M3.500 9.500h7M3.500 11.500h7M3.500 13.500h7" stroke="#9c948c"/></svg><span class="n" style="transform:scaleX(0.9838)">nsd_tmplog11772</span><span class="d" style="transform:scaleX(0.9762)">6/13/2017 11:17 AM</span><span class="ty" style="transform:scaleX(0.9957)">Text Document</span><span class="s" style="transform:scaleX(0.8841)">0 KB</span></div>
<div class="row" style="top:578px"><svg class="ic" width="16" height="16" viewBox="0 0 16 16"><path d="M1.5 0.5h7.500l3.500 3.500v11.500h-11z" fill="#fff" stroke="#858585"/><path d="M9.300 1v3h3" fill="none" stroke="#a8a8a8" stroke-width="0.900"/></svg><span class="n" style="transform:scaleX(0.9598)">nsd_userenv_tmp_2852.tmp</span><span class="d" style="transform:scaleX(0.9762)">6/13/2017 11:16 AM</span><span class="ty" style="transform:scaleX(0.9624)">TMP File</span><span class="s" style="transform:scaleX(0.8841)">2 KB</span></div>
<div class="row" style="top:599px"><svg class="ic" width="16" height="16" viewBox="0 0 16 16"><path d="M1.5 0.5h7.500l3.500 3.500v11.500h-11z" fill="#fff" stroke="#858585"/><path d="M9.300 1v3h3" fill="none" stroke="#a8a8a8" stroke-width="0.900"/></svg><span class="n" style="transform:scaleX(0.9598)">nsd_userenv_tmp_3648.tmp</span><span class="d" style="transform:scaleX(0.9564)">6/13/2017 3:22 PM</span><span class="ty" style="transform:scaleX(0.9624)">TMP File</span><span class="s" style="transform:scaleX(0.8841)">2 KB</span></div>
<div class="row" style="top:620px"><svg class="ic" width="16" height="16" viewBox="0 0 16 16"><path d="M1.5 0.5h7.500l3.500 3.500v11.500h-11z" fill="#fff" stroke="#858585"/><path d="M9.300 1v3h3" fill="none" stroke="#a8a8a8" stroke-width="0.900"/></svg><span class="n" style="transform:scaleX(0.9573)">nsd_userenv_tmp_10896.tmp</span><span class="d" style="transform:scaleX(0.9762)">6/13/2017 11:17 AM</span><span class="ty" style="transform:scaleX(0.9624)">TMP File</span><span class="s" style="transform:scaleX(0.8841)">2 KB</span></div>
<div class="row" style="top:641px"><svg class="ic" width="16" height="16" viewBox="0 0 16 16"><path d="M1.5 0.5h7.500l3.500 3.500v11.500h-11z" fill="#fff" stroke="#858585"/><path d="M9.300 1v3h3" fill="none" stroke="#a8a8a8" stroke-width="0.900"/><path d="M3.500 3.500h4M3.500 5.500h7M3.500 7.500h7M3.500 9.500h7M3.500 11.500h7M3.500 13.500h7" stroke="#9c948c"/></svg><span class="n" style="transform:scaleX(0.9687)">ScheduledHeartbeat</span><span class="d" style="transform:scaleX(0.9727)">6/14/2017 9:29 AM</span><span class="ty" style="transform:scaleX(0.9957)">Text Document</span><span class="s" style="transform:scaleX(0.8841)">1 KB</span></div>
<div class="row" style="top:662px"><svg class="ic" width="16" height="16" viewBox="0 0 16 16"><path d="M1.5 0.5h7.500l3.500 3.500v11.500h-11z" fill="#fff" stroke="#858585"/><path d="M9.300 1v3h3" fill="none" stroke="#a8a8a8" stroke-width="0.900"/></svg><span class="n" style="transform:scaleX(0.9657)">UDD31BA.tmp</span><span class="d" style="transform:scaleX(0.9681)">9/24/2016 12:59 AM</span><span class="ty" style="transform:scaleX(0.9624)">TMP File</span><span class="s" style="transform:scaleX(0.8868)">49 KB</span></div>
<div class="row" style="top:683px"><svg class="ic" width="16" height="16" viewBox="0 0 16 16"><path d="M1.5 0.5h7.500l3.500 3.500v11.500h-11z" fill="#fff" stroke="#858585"/><path d="M9.300 1v3h3" fill="none" stroke="#a8a8a8" stroke-width="0.900"/></svg><span class="n" style="transform:scaleX(0.9529)">UDD31BB.tmp</span><span class="d" style="transform:scaleX(0.9727)">9/24/2016 1:04 AM</span><span class="ty" style="transform:scaleX(0.9624)">TMP File</span><span class="s" style="transform:scaleX(0.8868)">24 KB</span></div>
<div class="row" style="top:704px;height:22px"><svg class="ic" width="16" height="16" viewBox="0 0 16 16"><path d="M1.5 0.5h7.500l3.500 3.500v11.500h-11z" fill="#fff" stroke="#858585"/><path d="M9.300 1v3h3" fill="none" stroke="#a8a8a8" stroke-width="0.900"/></svg><span class="n" style="transform:scaleX(0.9577)">WVXMEAGB)T9WM5~U4Y]1YI2.tmp</span><span class="d" style="transform:scaleX(0.9727)">6/14/2017 9:29 AM</span><span class="ty" style="transform:scaleX(0.9624)">TMP File</span><span class="s" style="transform:scaleX(0.8841)">0 KB</span></div>
<div class="t" style="left:13px;top:754px;color:#2e3a62"><span class="x" style="transform:scaleX(0.97)">29 items</span></div>
<div class="t" style="left:78px;top:754px;color:#2e3a62"><span class="x" style="transform:scaleX(0.9637)">29 items selected</span></div>
<div class="a" style="left:902px;top:750px;width:22px;height:22px;background:#c9e9fe;border:1px solid #5aa2da"></div>
<svg class="a" style="left:905.500px;top:755px" width="17" height="13" viewBox="0 0 17 13"><path d="M0.500 0.500h4v3.500h-4zM0.500 4.500h4v3.500h-4zM0.500 8.500h4v3.500h-4z" fill="#fff" stroke="#6a7f94"/><path d="M2 1.800h1v1H2zM2 5.800h1v1H2zM2 9.800h1v1H2z" fill="#a0552a"/><path d="M6.500 2.300h4M12.500 2.300h4M6.500 6.300h4M12.500 6.300h4M6.500 10.300h4M12.500 10.300h4" stroke="#4d6f8f" stroke-width="1.200"/></svg>
<svg class="a" style="left:928px;top:755px" width="14" height="11" viewBox="0 0 14 11"><path d="M0.500 0.500h13v10h-13z" fill="#fff" stroke="#8c8c98"/><path d="M2 2h10v7H2z" fill="#8cc0ea"/><path d="M2 2h10v2H2z" fill="#5a94d4"/><path d="M2 7q2.500-3 5-1.500t5-0.500v4H2z" fill="#35525f"/></svg>
</body></html>
